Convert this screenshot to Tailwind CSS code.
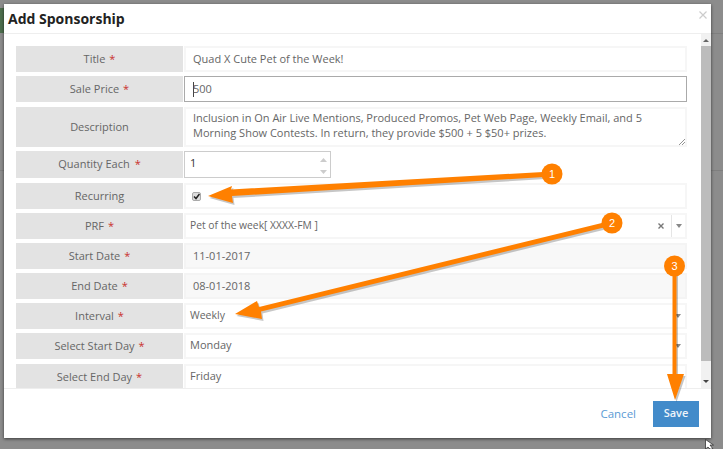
<!DOCTYPE html>
<html lang="en">
<head>
<meta charset="UTF-8">
<title>Add Sponsorship</title>
<script src="https://cdn.jsdelivr.net/npm/@tailwindcss/browser@4"></script>
</head>
<body class="bg-[#8c8c8c] font-['Open_Sans',sans-serif] text-[11px] text-[#666] overflow-hidden">
<div class="relative w-[723px] h-[449px] overflow-hidden pt-[4px] pl-[4px]">
  <!-- page behind the backdrop -->
  <div class="absolute left-0 top-[8px] w-[4px] h-[25px] bg-[#4d6e4d]"></div>
  <div class="absolute right-0 top-[33px] w-[12px] h-px bg-[#7f7f7f]"></div>
  <div class="absolute right-0 top-[170px] w-[12px] h-px bg-[#7f7f7f]"></div>
  <div class="absolute left-0 top-[170px] w-[4px] h-px bg-[#7f7f7f]"></div>

  <div class="w-[707px] h-[434px] bg-white flex flex-col shadow-[0_1px_3px_rgba(0,0,0,0.6)] relative">
    <div class="h-[30px] shrink-0 border-b border-[#eee] flex items-center justify-between pl-[4px] pr-[3px]">
      <h4 class="text-[14px] leading-[30px] font-bold text-[#222]">Add Sponsorship</h4>
      <svg class="w-[8px] h-[8px] mb-[8px] mr-[1px]" viewBox="0 0 8 8"><path d="M0.5 0.5L7.5 7.5M7.5 0.5L0.5 7.5" stroke="#ccc" stroke-width="1.2"/></svg>
    </div>

    <div class="h-[355px] shrink-0 flex overflow-hidden border-b border-[#eee]">
      <div class="flex-1 pl-[12px] pr-[14px] pt-[12px] flex flex-col">
        <div class="flex h-[26px] shrink-0">
          <div class="w-[167px] bg-[#e3e3e3] flex items-center justify-center">Title <span class="text-[#c9302c] ml-[4px]">*</span></div>
          <div class="flex-1 ml-px border-2 border-[#f6f6f6] flex items-center pl-[7px]">Quad X Cute Pet of the Week!</div>
        </div>
        <div class="flex h-[26px] shrink-0 mt-[4px]">
          <div class="w-[167px] bg-[#e3e3e3] flex items-center justify-center">Sale Price <span class="text-[#c9302c] ml-[4px]">*</span></div>
          <div class="flex-1 ml-px border border-[#aaa] flex items-center pl-[8px]"><span class="w-px h-[15px] bg-[#444]"></span><span class="-ml-[1px]">500</span></div>
        </div>
        <div class="flex h-[40px] shrink-0 mt-[5px]">
          <div class="w-[167px] bg-[#e3e3e3] flex items-center justify-center">Description</div>
          <div class="relative flex-1 ml-px border-2 border-[#f6f6f6] pl-[7px] pt-[1px] leading-[15px]">
            Inclusion in On Air Live Mentions, Produced Promos, Pet Web Page, Weekly Email, and 5<br>Morning Show Contests. In return, they provide $500 + 5 $50+ prizes.
            <svg class="absolute right-0 bottom-0 w-[7px] h-[7px]" viewBox="0 0 7 7"><path d="M1 7L7 1M4 7L7 4" stroke="#777" stroke-width="0.8"/></svg>
          </div>
        </div>
        <div class="flex h-[27px] shrink-0 mt-[4px]">
          <div class="w-[167px] bg-[#e3e3e3] flex items-center justify-center">Quantity Each <span class="text-[#c9302c] ml-[5px]">*</span></div>
          <div class="relative w-[147px] ml-px border border-[#ccc] pl-[5px] pt-[2px] leading-[18px] text-[#333]">1
            <svg class="absolute right-[3px] top-[6px] w-[7px] h-[16px]" viewBox="0 0 7 16"><path d="M0 4L3.5 0L7 4Z" fill="#ccc"/><path d="M0 12L7 12L3.5 16Z" fill="#ccc"/></svg>
          </div>
        </div>
        <div class="flex h-[26px] shrink-0 mt-[5px]">
          <div class="w-[167px] bg-[#e3e3e3] flex items-center justify-center">Recurring</div>
          <div class="flex-1 ml-px border-2 border-[#f6f6f6] flex items-center pl-[6px]">
            <span class="w-[9px] h-[9px] rounded-[2px] bg-[#ddd] border border-[#aaa] flex items-center justify-center">
              <svg class="w-[7px] h-[7px]" viewBox="0 0 7 7"><path d="M1 3.5L3 5.5L6.5 1" fill="none" stroke="#222" stroke-width="1.5"/></svg>
            </span>
          </div>
        </div>
        <div class="flex h-[26px] shrink-0 mt-[4px]">
          <div class="w-[167px] bg-[#e3e3e3] flex items-center justify-center">PRF <span class="text-[#c9302c] ml-[4px]">*</span></div>
          <div class="flex-1 ml-px border-2 border-[#f6f6f6] flex items-center pl-[4px] text-[10.3px]">
            <span class="flex-1">Pet of the week[ XXXX-FM ]</span>
            <span class="w-[6px] h-[6px] mr-[7px] flex"><svg class="w-full h-full" viewBox="0 0 6 6"><path d="M0.5 0.5L5.5 5.5M5.5 0.5L0.5 5.5" stroke="#777" stroke-width="1.4"/></svg></span>
            <span class="w-[14px] h-full border-l border-[#e5e5e5] flex items-center justify-center"><span class="w-0 h-0 border-x-[3px] border-x-transparent border-t-[4px] border-t-[#888]"></span></span>
          </div>
        </div>
        <div class="flex h-[26px] shrink-0 mt-[4px]">
          <div class="w-[167px] bg-[#e3e3e3] flex items-center justify-center">Start Date <span class="text-[#c9302c] ml-[4px]">*</span></div>
          <div class="flex-1 ml-px bg-[#f8f8f8] border-2 border-[#f4f4f4] flex items-center pl-[7px]">11-01-2017</div>
        </div>
        <div class="flex h-[26px] shrink-0 mt-[4px]">
          <div class="w-[167px] bg-[#e3e3e3] flex items-center justify-center">End Date <span class="text-[#c9302c] ml-[4px]">*</span></div>
          <div class="flex-1 ml-px bg-[#f8f8f8] border-2 border-[#f4f4f4] flex items-center pl-[7px]">08-01-2018</div>
        </div>
        <div class="flex h-[26px] shrink-0 mt-[4px]">
          <div class="w-[167px] bg-[#e3e3e3] flex items-center justify-center">Interval <span class="text-[#c9302c] ml-[4px]">*</span></div>
          <div class="flex-1 ml-px border-2 border-[#f6f6f6] flex items-center pl-[4px] pr-[4px]">
            <span class="flex-1 text-[10.5px]">Weekly</span>
            <span class="w-0 h-0 border-x-[3px] border-x-transparent border-t-[4px] border-t-[#888]"></span>
          </div>
        </div>
        <div class="flex h-[26px] shrink-0 mt-[4px]">
          <div class="w-[167px] bg-[#e3e3e3] flex items-center justify-center">Select Start Day <span class="text-[#c9302c] ml-[4px]">*</span></div>
          <div class="flex-1 ml-px border-2 border-[#f6f6f6] flex items-center pl-[4px] pr-[4px]">
            <span class="flex-1 pb-[2px]">Monday</span>
            <span class="w-0 h-0 border-x-[3px] border-x-transparent border-t-[4px] border-t-[#888]"></span>
          </div>
        </div>
        <div class="flex h-[26px] shrink-0 mt-[5px]">
          <div class="w-[167px] bg-[#e3e3e3] flex items-center justify-center">Select End Day <span class="text-[#c9302c] ml-[4px]">*</span></div>
          <div class="flex-1 ml-px border-2 border-[#f6f6f6] flex items-center pl-[4px] pb-[2px]">Friday</div>
        </div>
      </div>
      <!-- scrollbar -->
      <div class="w-[10px] shrink-0 bg-[#f1f1f1] flex flex-col items-center">
        <div class="h-[12px] shrink-0 w-full flex items-center justify-center"><span class="w-0 h-0 border-x-[3px] border-x-transparent border-b-[3px] border-b-[#666]"></span></div>
        <div class="h-[315px] shrink-0 w-full bg-[#bcbcbc]"></div>
        <div class="flex-1 w-full flex items-end justify-center pb-[5px]"><span class="w-0 h-0 border-x-[3px] border-x-transparent border-t-[3px] border-t-[#444]"></span></div>
      </div>
    </div>

    <div class="flex-1 flex items-center justify-end pr-[12px]">
      <span class="text-[#5b9bd5] text-[11.5px] mr-[17px]">Cancel</span>
      <span class="w-[46px] h-[26px] bg-[#428bca] text-[#eef4fa] font-semibold flex items-center justify-center">Save</span>
    </div>
  </div>

  <!-- annotation arrows drawn over the screenshot -->
  <svg class="absolute left-0 top-0 w-[723px] h-[449px] pointer-events-none" viewBox="0 0 723 449" font-family="Liberation Sans, sans-serif">
    <g fill="#000" opacity="0.22" transform="translate(1.5,2)">
      <path d="M552 171.500L231 189.500L232 186L208 196L233 203L232 196L552 176.500Z"/>
      <path d="M612 220.500L259 307L257 301L235 314L262 319L261 311.500L612 225.500Z"/>
      <path d="M672.500 266L672.500 374L667 374L675 400L684 374L676.500 374L676.500 266Z"/>
    </g>
    <g fill="#ff8000">
      <path d="M552 171.500L231 189.500L232 186L208 196L233 203L232 196L552 176.500Z"/>
      <path d="M612 220.500L259 307L257 301L235 314L262 319L261 311.500L612 225.500Z"/>
      <path d="M672.500 266L672.500 374L667 374L675 400L684 374L676.500 374L676.500 266Z"/>
      <circle cx="552" cy="174" r="10.5"/>
      <circle cx="612" cy="223" r="10.5"/>
      <circle cx="674.500" cy="266" r="10.5"/>
    </g>
    <g fill="#fff" font-size="11" text-anchor="middle">
      <text x="552" y="178">1</text>
      <text x="612" y="227">2</text>
      <text x="674.500" y="270">3</text>
    </g>
  </svg>
  <!-- mouse cursor -->
  <svg class="absolute left-[705px] top-[439px] w-[9px] h-[10px]" viewBox="0 0 9 10"><path d="M0.500 0.500L0.500 10L3 8L5 10L8 10L5 6L8.500 6Z" fill="#fff" stroke="#222" stroke-width="0.7"/></svg>
</div>
</body>
</html>
